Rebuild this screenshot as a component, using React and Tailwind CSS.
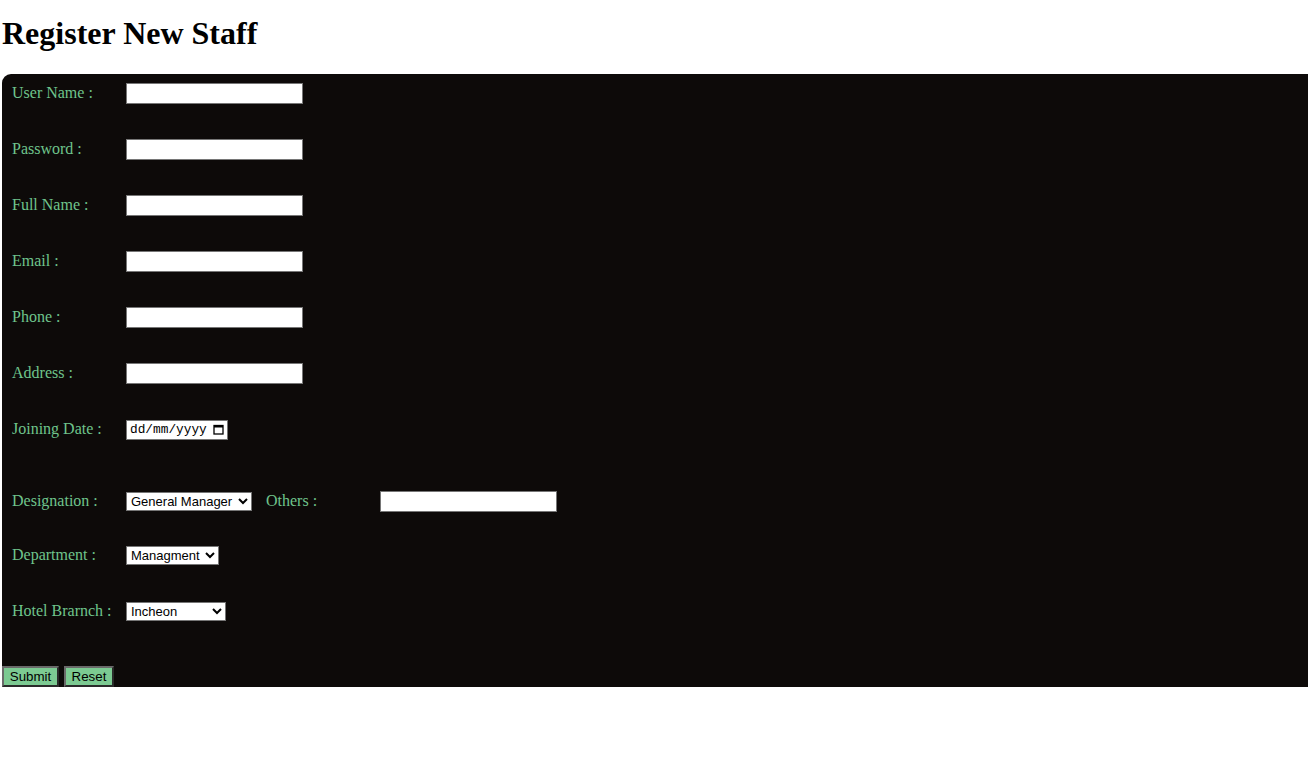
import React from 'react';

const fields = ['User Name :', 'Password :', 'Full Name :', 'Email :', 'Phone :', 'Address :'];

const inputCls = 'w-[177px] h-[21px] bg-white border border-[#767676] px-[2px] text-[13px] outline-none';
const selectCls = 'h-[19px] bg-white border border-[#767676] text-[13px] text-black leading-none pl-0';
const btnCls = 'h-[21px] bg-[#7cca92] text-[13.33px] text-black border-2 border-t-[#6a6a6a] border-l-[#6a6a6a] border-b-[#2a2a2a] border-r-[#2a2a2a] leading-none';

const Label = ({ children, w = 'w-[114px]' }) => (
  <span className={`${w} shrink-0 pb-[2px] text-[16px] text-[#6fc48c]`}>{children}</span>
);

const App = () => {
  return (
    <div className="min-h-screen bg-white pl-[2px] overflow-hidden" style={{ fontFamily: '"Liberation Serif", "Times New Roman", serif' }}>
      {/* 标题 */}
      <h1 className="text-[32px] font-bold leading-[37px] pt-[15px] pb-[22px] text-black">Register New Staff</h1>

      {/* 表单 */}
      <div className="bg-[#0d0a09] rounded-tl-[9px] w-[calc(100%+20px)] pt-[9px]">
        <div className="flex flex-col gap-[35px] pl-[10px]">
          {fields.map((f) => (
            <div key={f} className="flex items-center h-[21px]">
              <Label>{f}</Label>
              <input type={f.startsWith('Password') ? 'password' : 'text'} className={inputCls} />
            </div>
          ))}
          <div className="flex items-center h-[21px]">
            <Label>Joining Date :</Label>
            <div className="w-[102px] h-[20px] bg-white border border-[#767676] flex items-center justify-between px-[3px] text-[13px] text-black" style={{ fontFamily: '"Liberation Mono", "DejaVu Sans Mono", monospace' }}>
              <span className="text-[12.8px]">dd/mm/yyyy</span>
              <svg width="11" height="11" viewBox="0 0 11 11">
                <rect x="1" y="1.5" width="9" height="8.5" fill="none" stroke="#000" strokeWidth="1.3" />
                <rect x="1" y="1.5" width="9" height="2" fill="#000" />
              </svg>
            </div>
          </div>
        </div>

        <div className="flex flex-col gap-[33px] pl-[10px] mt-[51px]">
          <div className="flex items-center h-[21px]">
            <Label>Designation :</Label>
            <select className={`${selectCls} w-[126px]`} style={{ fontFamily: '"Liberation Sans", Arial, sans-serif' }} defaultValue="gm">
              <option value="gm">General Manager</option>
            </select>
            <span className="ml-[14px] w-[114px] pb-[2px] text-[16px] text-[#6fc48c]">Others :</span>
            <input type="text" className={inputCls} />
          </div>
          <div className="flex items-center h-[21px]">
            <Label>Department :</Label>
            <select className={`${selectCls} w-[93px]`} style={{ fontFamily: '"Liberation Sans", Arial, sans-serif' }} defaultValue="m">
              <option value="m">Managment</option>
            </select>
          </div>
          <div className="flex items-center h-[21px] mt-[2px]">
            <Label>Hotel Brarnch :</Label>
            <select className={`${selectCls} w-[100px]`} style={{ fontFamily: '"Liberation Sans", Arial, sans-serif' }} defaultValue="i">
              <option value="i">Incheon</option>
            </select>
          </div>
        </div>

        {/* 按钮 */}
        <div className="flex gap-[5px] mt-[44px]" style={{ fontFamily: '"Liberation Sans", Arial, sans-serif' }}>
          <button className={`${btnCls} w-[57px]`}>Submit</button>
          <button className={`${btnCls} w-[50px]`}>Reset</button>
        </div>
      </div>
    </div>
  );
};

export default App;
